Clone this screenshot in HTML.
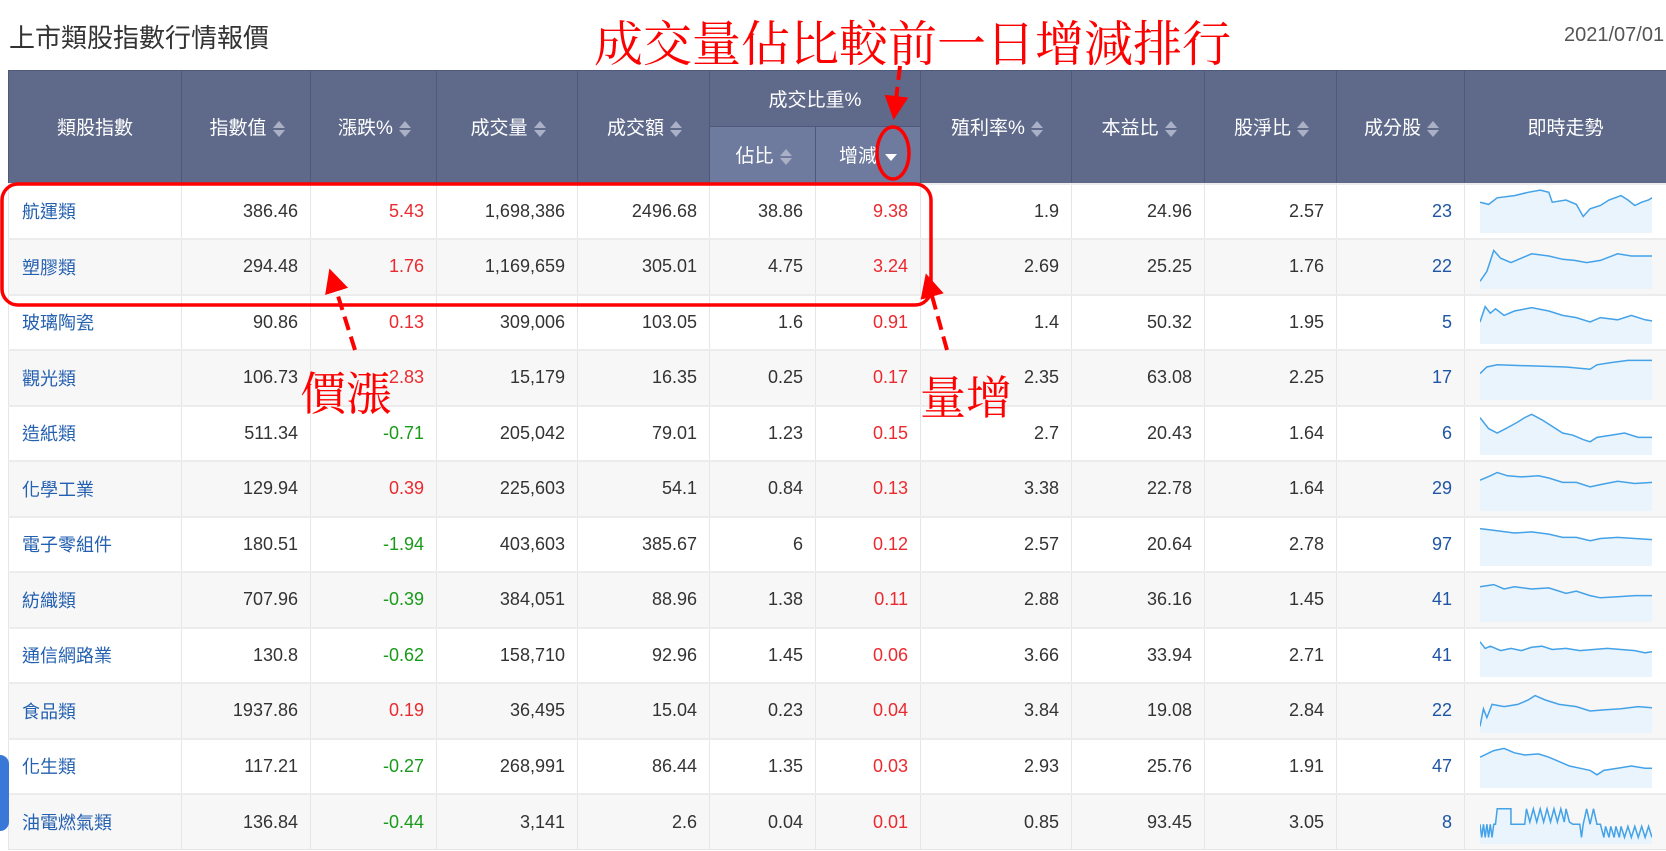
<!DOCTYPE html>
<html><head><meta charset="utf-8">
<style>
*{margin:0;padding:0;box-sizing:border-box}
body{width:1666px;height:851px;overflow:hidden;background:#fff;font-family:"Liberation Sans","Noto Sans CJK TC",sans-serif;position:relative}
.title{position:absolute;left:9px;top:18px;font-size:26px;color:#333}
.date{position:absolute;left:1564px;top:24px;font-size:20px;color:#555;white-space:nowrap}
table{position:absolute;left:8px;top:70px;border-collapse:collapse;table-layout:fixed;width:1658px}
th{background:#5f6a8b;color:#fff;font-weight:normal;font-size:19px;border:1px solid #4e587a;height:56px}
th.sub{background:#6f7b9e;height:57px}
td{height:55.5px;font-size:18px;color:#333;text-align:right;padding-right:12px;border:1px solid #e6e6e6;border-top:2px solid #ececec}
tr:nth-child(even) td{background:#f7f7f7}
td.n{text-align:left;padding-left:13px;color:#2460b0}
td.c{color:#1f55a5}
.r{color:#ea2a2f}.g{color:#1a9a1a}
td.s{padding:0 14px 0 15px;text-align:left}
.ar{display:inline-block;width:10px;height:16px;vertical-align:middle;margin-left:6px;position:relative}
.ar:before{content:"";position:absolute;left:0;top:0;border-left:6px solid transparent;border-right:6px solid transparent;border-bottom:7px solid #aab1c6}
.ar:after{content:"";position:absolute;left:0;top:9px;border-left:6px solid transparent;border-right:6px solid transparent;border-top:7px solid #aab1c6}
.dn{display:inline-block;vertical-align:middle;margin-left:8px;border-left:6px solid transparent;border-right:6px solid transparent;border-top:7px solid #fff}
svg.sp{display:block;width:172px;height:44px}
.ov{position:absolute;left:0;top:0}
.ann{position:absolute;color:#f00;font-family:"Noto Serif CJK SC","Liberation Serif",serif;white-space:nowrap}
</style></head><body>
<div class="title">上市類股指數行情報價</div>
<div class="date">2021/07/01</div>
<table>
<colgroup><col style="width:173px"><col style="width:129px"><col style="width:126px"><col style="width:141px"><col style="width:132px"><col style="width:106px"><col style="width:105px"><col style="width:151px"><col style="width:133px"><col style="width:132px"><col style="width:128px"><col style="width:202px"></colgroup>
<tr><th rowspan="2">類股指數</th><th rowspan="2">指數值<i class="ar"></i></th><th rowspan="2">漲跌%<i class="ar"></i></th><th rowspan="2">成交量<i class="ar"></i></th><th rowspan="2">成交額<i class="ar"></i></th><th colspan="2">成交比重%</th><th rowspan="2">殖利率%<i class="ar"></i></th><th rowspan="2">本益比<i class="ar"></i></th><th rowspan="2">股淨比<i class="ar"></i></th><th rowspan="2">成分股<i class="ar"></i></th><th rowspan="2">即時走勢</th></tr>
<tr><th class="sub">佔比<i class="ar"></i></th><th class="sub">增減<i class="dn"></i></th></tr>
<tr><td class="n">航運類</td><td>386.46</td><td class="r">5.43</td><td>1,698,386</td><td>2496.68</td><td>38.86</td><td class="r">9.38</td><td>1.9</td><td>24.96</td><td>2.57</td><td class="c">23</td><td class="s"><svg class="sp" viewBox="0 0 100 40" preserveAspectRatio="none"><polygon fill="#e9f4fd" points="0,12 5,14 10,8 20,6 28,3 35,1 40,3 42,12 50,10 56,14 60,25 64,18 70,15 75,10 82,6 86,10 90,15 94,12 98,10 100,8 100,40 0,40"/><polyline fill="none" stroke="#44a2e8" stroke-width="1.5" vector-effect="non-scaling-stroke" points="0,12 5,14 10,8 20,6 28,3 35,1 40,3 42,12 50,10 56,14 60,25 64,18 70,15 75,10 82,6 86,10 90,15 94,12 98,10 100,8"/></svg></td></tr>
<tr><td class="n">塑膠類</td><td>294.48</td><td class="r">1.76</td><td>1,169,659</td><td>305.01</td><td>4.75</td><td class="r">3.24</td><td>2.69</td><td>25.25</td><td>1.76</td><td class="c">22</td><td class="s"><svg class="sp" viewBox="0 0 100 40" preserveAspectRatio="none"><polygon fill="#e9f4fd" points="0,33 4,24 8,5 12,12 18,16 24,12 30,8 40,10 48,13 55,14 62,16 70,14 80,8 88,10 100,10 100,40 0,40"/><polyline fill="none" stroke="#44a2e8" stroke-width="1.5" vector-effect="non-scaling-stroke" points="0,33 4,24 8,5 12,12 18,16 24,12 30,8 40,10 48,13 55,14 62,16 70,14 80,8 88,10 100,10"/></svg></td></tr>
<tr><td class="n">玻璃陶瓷</td><td>90.86</td><td class="r">0.13</td><td>309,006</td><td>103.05</td><td>1.6</td><td class="r">0.91</td><td>1.4</td><td>50.32</td><td>1.95</td><td class="c">5</td><td class="s"><svg class="sp" viewBox="0 0 100 40" preserveAspectRatio="none"><polygon fill="#e9f4fd" points="0,20 3,6 6,12 9,8 14,14 20,10 30,7 40,10 48,14 56,16 64,20 70,16 80,18 88,14 96,18 100,19 100,40 0,40"/><polyline fill="none" stroke="#44a2e8" stroke-width="1.5" vector-effect="non-scaling-stroke" points="0,20 3,6 6,12 9,8 14,14 20,10 30,7 40,10 48,14 56,16 64,20 70,16 80,18 88,14 96,18 100,19"/></svg></td></tr>
<tr><td class="n">觀光類</td><td>106.73</td><td class="r">2.83</td><td>15,179</td><td>16.35</td><td>0.25</td><td class="r">0.17</td><td>2.35</td><td>63.08</td><td>2.25</td><td class="c">17</td><td class="s"><svg class="sp" viewBox="0 0 100 40" preserveAspectRatio="none"><polygon fill="#e9f4fd" points="0,16 4,10 10,8 30,9 50,10 64,12 68,8 76,6 86,4 100,4 100,40 0,40"/><polyline fill="none" stroke="#44a2e8" stroke-width="1.5" vector-effect="non-scaling-stroke" points="0,16 4,10 10,8 30,9 50,10 64,12 68,8 76,6 86,4 100,4"/></svg></td></tr>
<tr><td class="n">造紙類</td><td>511.34</td><td class="g">-0.71</td><td>205,042</td><td>79.01</td><td>1.23</td><td class="r">0.15</td><td>2.7</td><td>20.43</td><td>1.64</td><td class="c">6</td><td class="s"><svg class="sp" viewBox="0 0 100 40" preserveAspectRatio="none"><polygon fill="#e9f4fd" points="0,6 5,16 10,20 15,16 22,10 26,6 30,3 36,8 42,14 48,20 54,22 60,26 64,28 68,24 76,22 84,20 92,24 100,24 100,40 0,40"/><polyline fill="none" stroke="#44a2e8" stroke-width="1.5" vector-effect="non-scaling-stroke" points="0,6 5,16 10,20 15,16 22,10 26,6 30,3 36,8 42,14 48,20 54,22 60,26 64,28 68,24 76,22 84,20 92,24 100,24"/></svg></td></tr>
<tr><td class="n">化學工業</td><td>129.94</td><td class="r">0.39</td><td>225,603</td><td>54.1</td><td>0.84</td><td class="r">0.13</td><td>3.38</td><td>22.78</td><td>1.64</td><td class="c">29</td><td class="s"><svg class="sp" viewBox="0 0 100 40" preserveAspectRatio="none"><polygon fill="#e9f4fd" points="0,12 6,8 10,5 16,8 24,9 34,8 40,10 48,14 56,14 64,18 70,16 80,13 90,15 100,14 100,40 0,40"/><polyline fill="none" stroke="#44a2e8" stroke-width="1.5" vector-effect="non-scaling-stroke" points="0,12 6,8 10,5 16,8 24,9 34,8 40,10 48,14 56,14 64,18 70,16 80,13 90,15 100,14"/></svg></td></tr>
<tr><td class="n">電子零組件</td><td>180.51</td><td class="g">-1.94</td><td>403,603</td><td>385.67</td><td>6</td><td class="r">0.12</td><td>2.57</td><td>20.64</td><td>2.78</td><td class="c">97</td><td class="s"><svg class="sp" viewBox="0 0 100 40" preserveAspectRatio="none"><polygon fill="#e9f4fd" points="0,6 10,8 20,10 30,9 40,11 48,14 56,14 64,17 70,15 80,14 90,15 100,16 100,40 0,40"/><polyline fill="none" stroke="#44a2e8" stroke-width="1.5" vector-effect="non-scaling-stroke" points="0,6 10,8 20,10 30,9 40,11 48,14 56,14 64,17 70,15 80,14 90,15 100,16"/></svg></td></tr>
<tr><td class="n">紡織類</td><td>707.96</td><td class="g">-0.39</td><td>384,051</td><td>88.96</td><td>1.38</td><td class="r">0.11</td><td>2.88</td><td>36.16</td><td>1.45</td><td class="c">41</td><td class="s"><svg class="sp" viewBox="0 0 100 40" preserveAspectRatio="none"><polygon fill="#e9f4fd" points="0,8 8,6 14,10 20,8 30,10 40,9 50,14 56,12 64,16 70,18 80,17 90,16 100,16 100,40 0,40"/><polyline fill="none" stroke="#44a2e8" stroke-width="1.5" vector-effect="non-scaling-stroke" points="0,8 8,6 14,10 20,8 30,10 40,9 50,14 56,12 64,16 70,18 80,17 90,16 100,16"/></svg></td></tr>
<tr><td class="n">通信網路業</td><td>130.8</td><td class="g">-0.62</td><td>158,710</td><td>92.96</td><td>1.45</td><td class="r">0.06</td><td>3.66</td><td>33.94</td><td>2.71</td><td class="c">41</td><td class="s"><svg class="sp" viewBox="0 0 100 40" preserveAspectRatio="none"><polygon fill="#e9f4fd" points="0,8 3,14 6,12 12,16 18,14 24,16 30,13 36,12 42,15 50,14 58,16 66,15 74,14 82,15 90,16 96,18 100,17 100,40 0,40"/><polyline fill="none" stroke="#44a2e8" stroke-width="1.5" vector-effect="non-scaling-stroke" points="0,8 3,14 6,12 12,16 18,14 24,16 30,13 36,12 42,15 50,14 58,16 66,15 74,14 82,15 90,16 96,18 100,17"/></svg></td></tr>
<tr><td class="n">食品類</td><td>1937.86</td><td class="r">0.19</td><td>36,495</td><td>15.04</td><td>0.23</td><td class="r">0.04</td><td>3.84</td><td>19.08</td><td>2.84</td><td class="c">22</td><td class="s"><svg class="sp" viewBox="0 0 100 40" preserveAspectRatio="none"><polygon fill="#e9f4fd" points="0,34 2,18 4,26 7,14 14,16 22,14 28,10 32,6 38,10 46,14 56,16 64,20 72,19 82,18 92,16 100,17 100,40 0,40"/><polyline fill="none" stroke="#44a2e8" stroke-width="1.5" vector-effect="non-scaling-stroke" points="0,34 2,18 4,26 7,14 14,16 22,14 28,10 32,6 38,10 46,14 56,16 64,20 72,19 82,18 92,16 100,17"/></svg></td></tr>
<tr><td class="n">化生類</td><td>117.21</td><td class="g">-0.27</td><td>268,991</td><td>86.44</td><td>1.35</td><td class="r">0.03</td><td>2.93</td><td>25.76</td><td>1.91</td><td class="c">47</td><td class="s"><svg class="sp" viewBox="0 0 100 40" preserveAspectRatio="none"><polygon fill="#e9f4fd" points="0,12 8,6 14,4 20,8 26,10 34,9 40,12 46,16 52,20 58,22 64,24 68,28 72,24 80,22 88,20 96,22 100,22 100,40 0,40"/><polyline fill="none" stroke="#44a2e8" stroke-width="1.5" vector-effect="non-scaling-stroke" points="0,12 8,6 14,4 20,8 26,10 34,9 40,12 46,16 52,20 58,22 64,24 68,28 72,24 80,22 88,20 96,22 100,22"/></svg></td></tr>
<tr><td class="n">油電燃氣類</td><td>136.84</td><td class="g">-0.44</td><td>3,141</td><td>2.6</td><td>0.04</td><td class="r">0.01</td><td>0.85</td><td>93.45</td><td>3.05</td><td class="c">8</td><td class="s"><svg class="sp" viewBox="0 0 100 40" preserveAspectRatio="none"><polygon fill="#e9f4fd" points="0,22 1,34 2,22 3,34 4,22 5,34 6,22 7,34 8,22 9,22 10,8 18,8 18,22 26,22 27,8 29,20 31,8 33,20 35,8 37,20 39,8 41,20 43,8 45,20 47,8 49,20 50,8 52,20 54,22 58,22 59,34 60,22 62,8 64,22 66,8 68,22 70,22 72,34 73,24 75,34 76,24 78,34 79,24 81,34 82,24 84,34 86,24 88,34 90,24 92,34 94,24 96,34 98,24 100,34 100,40 0,40"/><polyline fill="none" stroke="#44a2e8" stroke-width="1.5" vector-effect="non-scaling-stroke" points="0,22 1,34 2,22 3,34 4,22 5,34 6,22 7,34 8,22 9,22 10,8 18,8 18,22 26,22 27,8 29,20 31,8 33,20 35,8 37,20 39,8 41,20 43,8 45,20 47,8 49,20 50,8 52,20 54,22 58,22 59,34 60,22 62,8 64,22 66,8 68,22 70,22 72,34 73,24 75,34 76,24 78,34 79,24 81,34 82,24 84,34 86,24 88,34 90,24 92,34 94,24 96,34 98,24 100,34"/></svg></td></tr>
</table>
<div style="position:absolute;left:0;top:755px;width:9px;height:76px;background:#3a78d8;border-radius:0 9px 9px 0"></div>
<svg class="ov" width="1666" height="851">
<defs><marker id="ah" markerWidth="6" markerHeight="6" refX="3" refY="3" orient="auto" markerUnits="strokeWidth"><path d="M0,0 L6,3 L0,6 Z" fill="#f00"/></marker></defs>
<rect x="2" y="184" width="929" height="121" rx="16" fill="none" stroke="#f00" stroke-width="3.5"/>
<ellipse cx="893" cy="153" rx="16" ry="26" fill="none" stroke="#f00" stroke-width="3.5"/>
<line x1="900" y1="66" x2="895" y2="108" stroke="#f00" stroke-width="4" stroke-dasharray="14,7" marker-end="url(#ah)"/>
<line x1="355" y1="350" x2="333" y2="280" stroke="#f00" stroke-width="4" stroke-dasharray="14,7" marker-end="url(#ah)"/>
<line x1="947" y1="350" x2="929" y2="285" stroke="#f00" stroke-width="4" stroke-dasharray="14,7" marker-end="url(#ah)"/>
</svg>
<div class="ann" style="left:594px;top:6px;font-size:49px">成交量佔比較前一日增減排行</div>
<div class="ann" style="left:300px;top:358px;font-size:46px">價漲</div>
<div class="ann" style="left:920px;top:362px;font-size:46px">量增</div>
</body></html>
